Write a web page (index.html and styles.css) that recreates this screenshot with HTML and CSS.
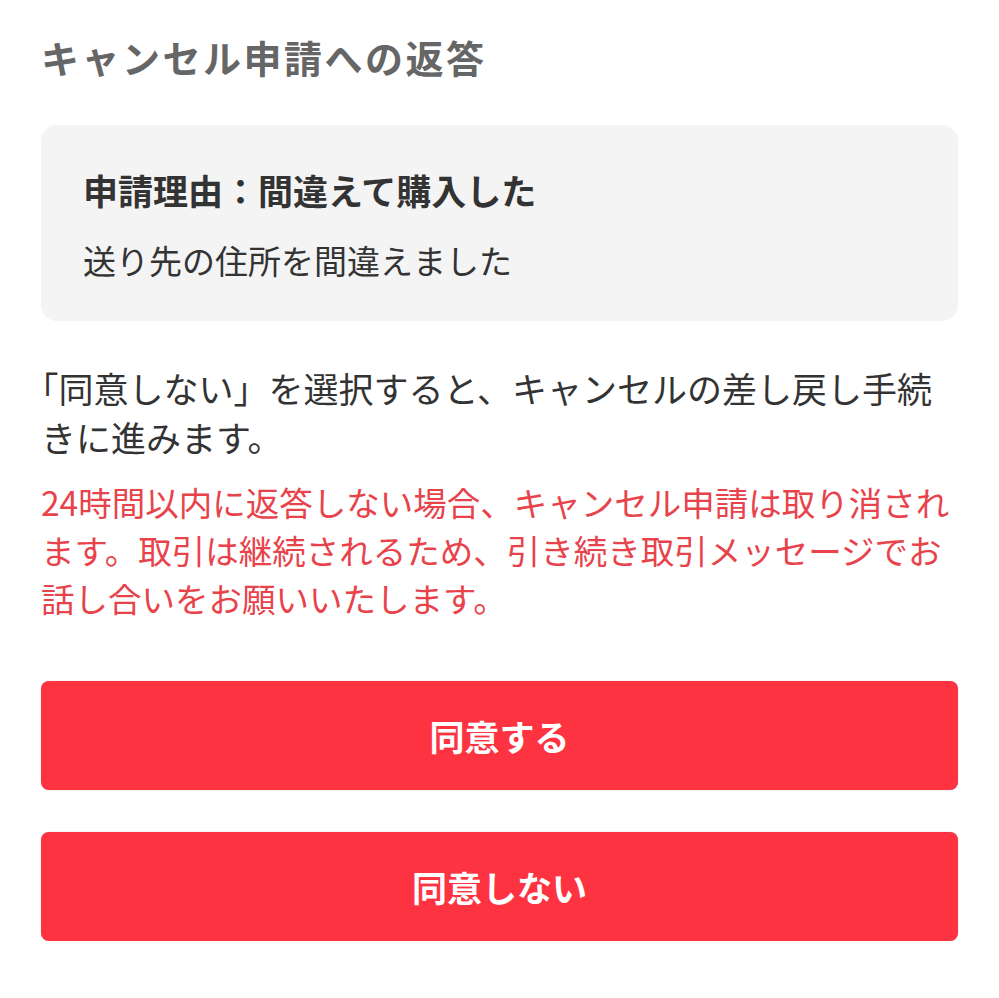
FILE: index.html
```html
<!DOCTYPE html>
<html lang="ja">
<head>
    <meta charset="UTF-8">
    <meta name="viewport" content="width=device-width, initial-scale=1.0">
    <title>キャンセル申請への返答</title>
    <link rel="stylesheet" href="styles.css">
</head>
<body>
    <div class="cancel-reply">
        <h1 class="page-title">キャンセル申請への返答</h1>

        <div class="reason-card">
            <p class="reason-title">申請理由：間違えて購入した</p>
            <p class="reason-text">送り先の住所を間違えました</p>
        </div>

        <p class="notice">「同意しない」を選択すると、キャンセルの差し戻し手続きに進みます。</p>
        <p class="warning">24時間以内に返答しない場合、キャンセル申請は取り消されます。取引は継続されるため、引き続き取引メッセージでお話し合いをお願いいたします。</p>

        <div class="actions">
            <button class="action-button">同意する</button>
            <button class="action-button">同意しない</button>
        </div>
    </div>
</body>
</html>
```

FILE: styles.css
```css
body {
    margin: 0;
    background: #fff;
    font-family: "Noto Sans CJK JP", "Noto Sans", sans-serif;
}

.cancel-reply {
    padding: 28px 41px 0;
}

.page-title {
    margin: 0;
    font-size: 38px;
    line-height: 58px;
    letter-spacing: 2.5px;
    font-weight: bold;
    color: #666;
}

.reason-card {
    margin-top: 39px;
    padding: 41px 42px 37px;
    background-color: #f4f4f4;
    border-radius: 16px;
    color: #333;
}

.reason-card p {
    margin: 0;
}

.reason-title {
    font-size: 35px;
    line-height: 48px;
    font-weight: bold;
}

.reason-text {
    margin-top: 22px !important;
    font-size: 33px;
    line-height: 48px;
}

/* opening bracket hangs half an em, like the app does */
.notice {
    margin: 42px 0 0;
    text-indent: -0.5em;
    font-size: 35px;
    line-height: 49px;
    color: #333;
}

.warning {
    margin: 17px 0 0;
    font-size: 33.5px;
    line-height: 48px;
    color: #e8434b;
}

.actions {
    display: flex;
    flex-direction: column;
    gap: 42px;
    margin-top: 59px;
}

.action-button {
    height: 109px;
    border: none;
    border-radius: 8px;
    background-color: #fe3341;
    box-shadow: 0 0 1px rgba(0, 0, 0, 0.35);
    color: #fff;
    font-family: inherit;
    font-size: 35px;
    font-weight: bold;
    cursor: pointer;
}
```
